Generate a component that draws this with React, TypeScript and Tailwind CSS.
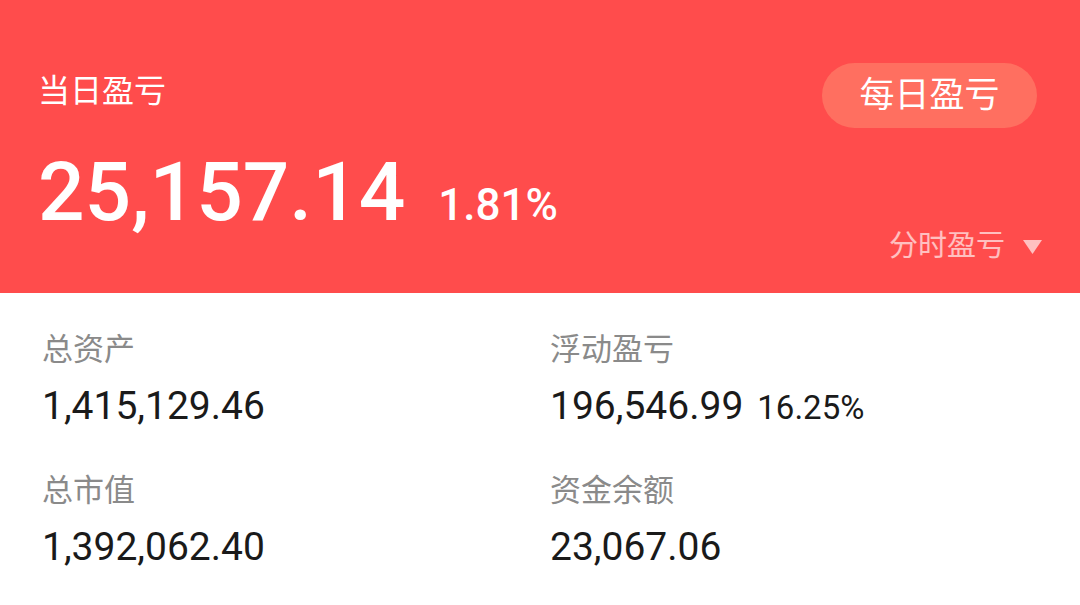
import { FC } from "react";

const cjk = "font-['Roboto','Noto_Sans_CJK_SC',sans-serif]";

const Stat: FC<{ label: string; value: string; extra?: string }> = ({ label, value, extra }) => (
  <div className="flex flex-col">
    <div className="text-[31px] leading-none text-[#8a8a8a]">{label}</div>
    <div className="mt-[22px] flex items-baseline">
      <span className="text-[39px] leading-none text-[#1a1a1a]">{value}</span>
      {extra && <span className="ml-[14px] text-[33px] leading-none text-[#1a1a1a]">{extra}</span>}
    </div>
  </div>
);

export default function App() {
  return (
    <div className={`h-[605px] w-[1080px] overflow-hidden bg-white ${cjk}`}>
      <div className="flex h-[293px] justify-between bg-[#ff4c4c] px-[38px]">
        <div className="flex flex-col pt-[75px]">
          <div className="text-[32px] leading-none text-white">当日盈亏</div>
          <div className="mt-[44px] flex items-baseline text-white">
            <span className="text-[82px] font-medium leading-none">25,157.14</span>
            <span className="ml-[33px] text-[44px] font-medium leading-none">1.81%</span>
          </div>
        </div>
        <div className="flex flex-col items-end pt-[63px]">
          <button className="mr-[5px] flex h-[65px] w-[215px] items-center justify-center rounded-full bg-[#ff6f60] text-[35px] leading-none text-white">
            每日盈亏
          </button>
          <div className="mt-[104px] flex items-center text-white/65">
            <span className="text-[29px] leading-none">分时盈亏</span>
            <svg className="ml-[18px]" width="19" height="14" viewBox="0 0 19 14">
              <path d="M0 0 H19 L9.5 14 Z" fill="currentColor" />
            </svg>
          </div>
        </div>
      </div>
      <div className="grid grid-cols-[508px_1fr] gap-y-[49px] pl-[42px] pt-[41px]">
        <Stat label="总资产" value="1,415,129.46" />
        <Stat label="浮动盈亏" value="196,546.99" extra="16.25%" />
        <Stat label="总市值" value="1,392,062.40" />
        <Stat label="资金余额" value="23,067.06" />
      </div>
    </div>
  );
}
